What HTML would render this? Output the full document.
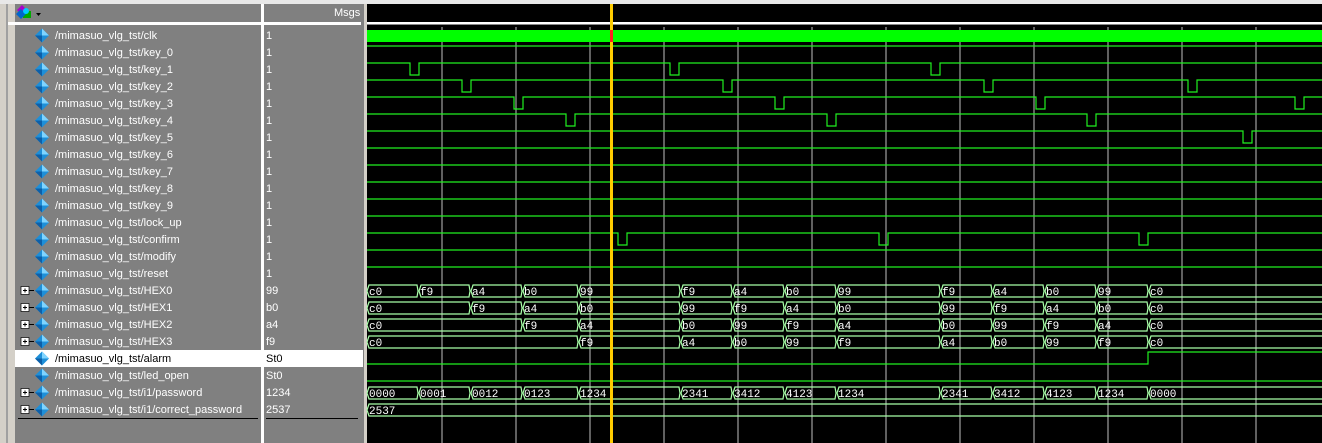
<!DOCTYPE html>
<html><head><meta charset="utf-8"><style>
body{margin:0;width:1322px;height:443px;overflow:hidden;background:#d4d0c8;font-family:"Liberation Sans",sans-serif;position:relative}
.p{position:absolute}
.row{position:absolute;height:17px;line-height:19px;font-size:11px;color:#fff;white-space:nowrap}
</style></head><body>
<div class="p" style="left:0;top:0;width:1322px;height:4px;background:#e8e8e8"></div>
<div class="p" style="left:6px;top:4px;width:2px;height:439px;background:#a0a0a0"></div>
<div class="p" style="left:8px;top:4px;width:253px;height:439px;background:#808080"></div>
<div class="p" style="left:8px;top:4px;width:7px;height:439px;background:#d4d0c8"></div>
<div class="p" style="left:261px;top:4px;width:3px;height:439px;background:#fff"></div>
<div class="p" style="left:264px;top:4px;width:100px;height:439px;background:#808080"></div>
<div class="p" style="left:364px;top:4px;width:3px;height:439px;background:#d4d0c8"></div>
<div class="p" style="left:8px;top:22px;width:353px;height:3px;background:#fff"></div>
<div class="p" style="left:334px;top:7px;font-size:11px;color:#fff">Msgs</div>
<svg class="p" style="left:14px;top:4px" width="30" height="18"><rect x="9" y="7" width="8" height="7" fill="#0a0"/><path d="M8 1 L3 6 L8 11 L13 6Z" fill="#a0c"/><path d="M7 5 L2 10 L7 15 L12 10Z" fill="#06c"/><circle cx="12" cy="7" r="3" fill="#0cf"/><path d="M22 9 L27 9 L24.5 12Z" fill="#000"/></svg>
<div class="p" style="left:15px;top:350px;width:348px;height:17px;background:#fff"></div>
<div class="p" style="left:18px;top:418px;width:240px;height:1px;background:#000"></div>
<div class="p" style="left:266px;top:418px;width:92px;height:1px;background:#000"></div>
<div id="names"></div>
<svg class="p" style="left:0;top:0" width="1322" height="443">
<defs><g id="dia"><path d="M0 -7 L7 0 L0 7 L-7 0Z" fill="#1e8fd8"/><path d="M0 -7 L7 0 L0 0Z" fill="#7fd4ff"/><path d="M-7 0 L0 7 L0 0Z" fill="#0d5fa8"/></g>
<g id="plus"><rect x="-4" y="-4" width="8" height="8" fill="#fff" stroke="#000" stroke-width="0.7"/><path d="M-2 0H2M0 -2V2" stroke="#000"/><path d="M4 0H9" stroke="#000"/></g></defs>
<g id="icons"></g>
<rect x="367" y="4" width="955" height="439" fill="#000"/>
<rect x="367" y="22" width="955" height="2" fill="#fff"/>
<rect x="367" y="24" width="955" height="1" fill="#888"/>
<g stroke="#808080" stroke-width="1.5">
<path d="M442 27V443M516 27V443M590 27V443M664 27V443M738 27V443M812 27V443M886 27V443M960 27V443M1034 27V443M1108 27V443M1182 27V443M1256 27V443"/></g>
<rect x="367" y="30" width="955" height="12" fill="#00ff00"/>
<g fill="none" stroke="#20f020" stroke-width="1.2">
<path d="M367 46H1322"/>
<path d="M367 63H410V75H419V63H670V75H679V63H931V75H940V63H1322"/>
<path d="M367 80H462V92H471V80H723V92H732V80H984V92H993V80H1188V92H1197V80H1322"/>
<path d="M367 97H514V109H523V97H775V109H784V97H1036V109H1045V97H1295V109H1304V97H1322"/>
<path d="M367 114H566V126H575V114H827V126H836V114H1087V126H1096V114H1322"/>
<path d="M367 131H1243V143H1252V131H1322"/>
<path d="M367 148H1322M367 165H1322M367 182H1322M367 199H1322M367 216H1322"/>
<path d="M367 233H618V245H627V233H879V245H888V233H1139V245H1148V233H1322"/>
<path d="M367 250H1322M367 267H1322"/>
<path d="M367 364H1148V352H1322"/>
<path d="M367 381H1322"/>
</g>
<g id="bus" fill="none" stroke="#a8ffa8" stroke-width="1.2"></g>
<g id="bt" fill="#fff" font-family="Liberation Mono,monospace" font-size="11"></g>
<rect x="610" y="4" width="3" height="439" fill="#ffcc00"/>
<rect x="610" y="30" width="3" height="12" fill="#ff2020"/>
</svg>
<script>
var names=["clk","key_0","key_1","key_2","key_3","key_4","key_5","key_6","key_7","key_8","key_9","lock_up","confirm","modify","reset","HEX0","HEX1","HEX2","HEX3","alarm","led_open","i1/password","i1/correct_password"];
var vals=["1","1","1","1","1","1","1","1","1","1","1","1","1","1","1","99","b0","a4","f9","St0","St0","1234","2537"];
var h="",ic="";
names.forEach(function(n,i){var t=27+17*i;var c=i==19?"#000":"#fff";
h+='<div class="row" style="left:55px;top:'+t+'px;color:'+c+'">/mimasuo_vlg_tst/'+n+'</div><div class="row" style="left:266px;top:'+t+'px;color:'+c+'">'+vals[i]+'</div>';
var cy=t+8.5;ic+='<use href="#dia" x="42" y="'+cy+'"/>';
if(i>=15&&i<=18||i>=21)ic+='<use href="#plus" x="25" y="'+cy+'"/>';});
document.getElementById("names").innerHTML=h;
document.getElementById("icons").innerHTML=ic;
var buses=[[15,[[367,"c0"],[418,"f9"],[470,"a4"],[522,"b0"],[578,"99"],[680,"f9"],[732,"a4"],[784,"b0"],[836,"99"],[940,"f9"],[992,"a4"],[1044,"b0"],[1096,"99"],[1148,"c0"]]],
[16,[[367,"c0"],[470,"f9"],[522,"a4"],[578,"b0"],[680,"99"],[732,"f9"],[784,"a4"],[836,"b0"],[940,"99"],[992,"f9"],[1044,"a4"],[1096,"b0"],[1148,"c0"]]],
[17,[[367,"c0"],[522,"f9"],[578,"a4"],[680,"b0"],[732,"99"],[784,"f9"],[836,"a4"],[940,"b0"],[992,"99"],[1044,"f9"],[1096,"a4"],[1148,"c0"]]],
[18,[[367,"c0"],[578,"f9"],[680,"a4"],[732,"b0"],[784,"99"],[836,"f9"],[940,"a4"],[992,"b0"],[1044,"99"],[1096,"f9"],[1148,"c0"]]],
[21,[[367,"0000"],[418,"0001"],[470,"0012"],[522,"0123"],[578,"1234"],[680,"2341"],[732,"3412"],[784,"4123"],[836,"1234"],[940,"2341"],[992,"3412"],[1044,"4123"],[1096,"1234"],[1148,"0000"]]],
[22,[[367,"2537"]]]];
var bp="",bt="";
buses.forEach(function(b){var t=27+17*b[0],y1=t+3,y2=t+15,m=t+9;var s=b[1];
for(var k=0;k<s.length;k++){var x=s[k][0]+(k?1:0),xe=k+1<s.length?s[k+1][0]-1:1322;
bp+='M'+x+' '+m+'L'+(x+2)+' '+y1+'H'+xe+(k+1<s.length?'L'+(xe+1)+' '+m:'')+'M'+x+' '+m+'L'+(x+2)+' '+y2+'H'+xe+(k+1<s.length?'L'+(xe+1)+' '+m:'');
bt+='<text x="'+(s[k][0]+2)+'" y="'+(t+13)+'">'+s[k][1]+'</text>';}});
document.getElementById("bus").innerHTML='<path d="'+bp+'"/>';
document.getElementById("bt").innerHTML=bt;
</script>
</body></html>
